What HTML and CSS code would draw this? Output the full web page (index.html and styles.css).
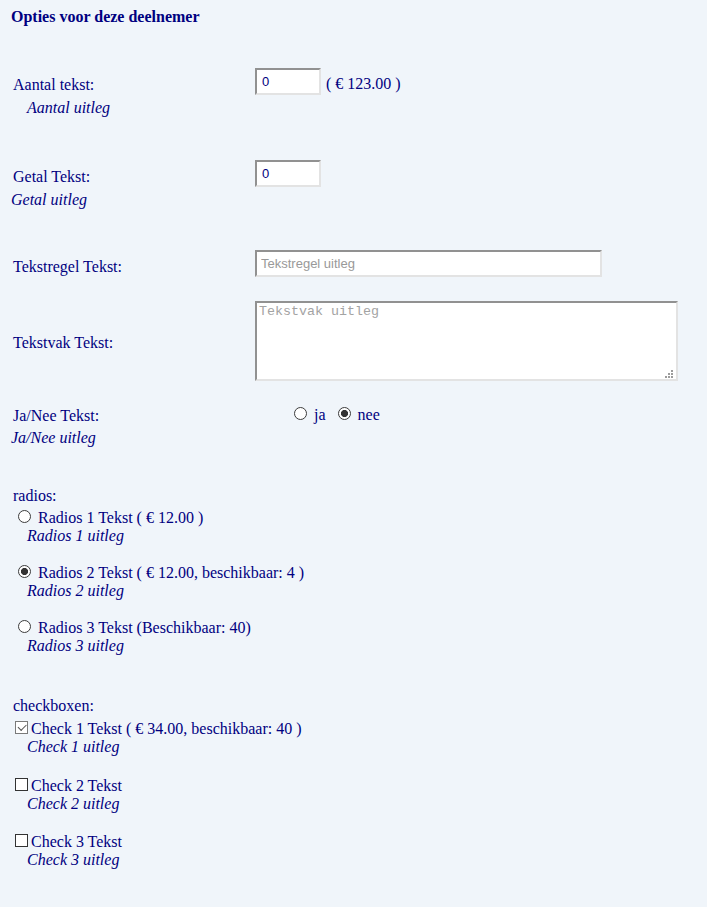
FILE: index.html
```html
<!DOCTYPE html>
<html lang="nl">
<head>
<meta charset="utf-8">
<title>Opties voor deze deelnemer</title>
<link rel="stylesheet" href="styles.css">
</head>
<body>
<div class="page">
  <h1 class="title">Opties voor deze deelnemer</h1>

  <div class="field f1">
    <div class="row">
      <label class="lbl" for="aantal">Aantal tekst:</label>
      <div class="ctl"><input id="aantal" class="num" type="number" value="0"><span class="price">( € 123.00 )</span></div>
    </div>
    <div class="hint indent">Aantal uitleg</div>
  </div>

  <div class="field f2">
    <div class="row">
      <label class="lbl" for="getal">Getal Tekst:</label>
      <div class="ctl"><input id="getal" class="num" type="number" value="0"></div>
    </div>
    <div class="hint out">Getal uitleg</div>
  </div>

  <div class="field f3">
    <div class="row">
      <label class="lbl" for="regel">Tekstregel Tekst:</label>
      <div class="ctl"><input id="regel" class="line" type="text" placeholder="Tekstregel uitleg"></div>
    </div>
  </div>

  <div class="field f4">
    <div class="row">
      <label class="lbl lbl-ta" for="vak">Tekstvak Tekst:</label>
      <div class="ctl">
        <span class="ta-wrap">
          <textarea id="vak" class="area" placeholder="Tekstvak uitleg"></textarea>
          <svg class="grip" width="8" height="8" viewBox="0 0 8 8" aria-hidden="true">
            <rect x="6" y="0" width="2" height="2"/>
            <rect x="3" y="3" width="2" height="2"/>
            <rect x="6" y="3" width="2" height="2"/>
            <rect x="0" y="6" width="2" height="2"/>
            <rect x="3" y="6" width="2" height="2"/>
            <rect x="6" y="6" width="2" height="2"/>
          </svg>
        </span>
      </div>
    </div>
  </div>

  <div class="field f5">
    <div class="row">
      <span class="lbl lbl-yn">Ja/Nee Tekst:</span>
      <div class="ctl ctl-yn">
        <label class="yn"><input class="rad" type="radio" name="jn" value="ja"> ja</label><label class="yn"><input class="rad" type="radio" name="jn" value="nee" checked> nee</label>
      </div>
    </div>
    <div class="hint out">Ja/Nee uitleg</div>
  </div>

  <div class="group g-radios">
    <div class="group-title">radios:</div>
    <div class="opt first">
      <label class="opt-line"><input class="rad" type="radio" name="radios"> Radios 1 Tekst ( € 12.00 )</label>
      <div class="opt-hint">Radios 1 uitleg</div>
    </div>
    <div class="opt">
      <label class="opt-line"><input class="rad" type="radio" name="radios" checked> Radios 2 Tekst ( € 12.00, beschikbaar: 4 )</label>
      <div class="opt-hint">Radios 2 uitleg</div>
    </div>
    <div class="opt">
      <label class="opt-line"><input class="rad" type="radio" name="radios"> Radios 3 Tekst (Beschikbaar: 40)</label>
      <div class="opt-hint">Radios 3 uitleg</div>
    </div>
  </div>

  <div class="group g-checks">
    <div class="group-title">checkboxen:</div>
    <div class="chk first">
      <label class="chk-line"><input class="cb" type="checkbox" checked>Check 1 Tekst ( € 34.00, beschikbaar: 40 )</label>
      <div class="chk-hint">Check 1 uitleg</div>
    </div>
    <div class="chk c2">
      <label class="chk-line"><input class="cb" type="checkbox">Check 2 Tekst</label>
      <div class="chk-hint">Check 2 uitleg</div>
    </div>
    <div class="chk c3">
      <label class="chk-line"><input class="cb" type="checkbox">Check 3 Tekst</label>
      <div class="chk-hint">Check 3 uitleg</div>
    </div>
  </div>
</div>
</body>
</html>
```
FILE: styles.css
```css
html, body {
  margin: 0;
  background: #f0f5fa;
}
body {
  color: #000080;
  font-family: "Liberation Serif", "Times New Roman", serif;
  font-size: 16px;
  line-height: 18px;
}
.page {
  padding: 8px 0 40px 13px;
}
.title {
  margin: 0 0 0 -2px;
  font-size: 16px;
  line-height: 18px;
  font-weight: bold;
}

/* form rows */
.f1 { margin-top: 42px; }
.f2 { margin-top: 43px; }
.f3 { margin-top: 41px; }
.f4 { margin-top: 24px; }
.f5 { margin-top: 25px; }

.row {
  display: grid;
  grid-template-columns: 242px 1fr;
  align-items: start;
}
.lbl {
  padding-top: 8px;
}
.lbl-ta {
  padding-top: 33px;
}
.lbl-yn {
  padding-top: 1px;
}
.ctl {
  display: flex;
  align-items: flex-start;
}
.price {
  padding-top: 7px;
  margin-left: 5px;
}

.hint {
  font-style: italic;
  margin-top: 4px;
}
.hint.indent {
  padding-left: 14px;
}
.hint.out {
  margin-left: -2px;
}

/* inputs */
.num,
.line {
  box-sizing: border-box;
  height: 27px;
  margin: 0;
  padding: 0 4px 0 5px;
  border: 2px solid;
  border-color: #919191 #e3e3e3 #e3e3e3 #919191;
  background: #fff;
  color: #000080;
  font-family: "Liberation Sans", Arial, sans-serif;
  font-size: 13px;
  outline: none;
}
.num {
  width: 66px;
  -moz-appearance: textfield;
}
.num::-webkit-inner-spin-button,
.num::-webkit-outer-spin-button {
  -webkit-appearance: none;
  margin: 0;
}
.line {
  width: 347px;
  padding-left: 4px;
}
.line::placeholder {
  color: #999;
}

.ta-wrap {
  position: relative;
  display: block;
  width: 423px;
  height: 80px;
}
.area {
  display: block;
  box-sizing: border-box;
  width: 423px;
  height: 80px;
  margin: 0;
  padding: 1px 2px;
  border: 2px solid;
  border-color: #919191 #e3e3e3 #e3e3e3 #919191;
  background: #fff;
  font-family: "Liberation Mono", "Courier New", monospace;
  font-size: 13.33px;
  resize: none;
  outline: none;
}
.area::placeholder {
  color: #a3a3a3;
}
.grip {
  position: absolute;
  right: 5px;
  bottom: 3px;
  fill: #9c9c9c;
}

/* radios */
.rad {
  -webkit-appearance: none;
  appearance: none;
  box-sizing: border-box;
  width: 13px;
  height: 13px;
  margin: 0 3px 0 5px;
  border: 1px solid #3c3c3c;
  border-radius: 50%;
  background: #fff;
  vertical-align: baseline;
}
.rad:checked {
  background: radial-gradient(circle, #333 0, #333 3.2px, #fff 3.9px);
}

.ctl-yn {
  display: block;
  padding-left: 34px;
}
.yn + .yn {
  margin-left: 7px;
}

/* groups */
.g-radios { margin-top: 40px; }
.g-checks { margin-top: 42px; }

.opt { margin-top: 19px; }
.opt.first { margin-top: 4px; }
.opt-line { display: block; }
.opt-hint {
  font-style: italic;
  padding-left: 14px;
}

.chk { margin-top: 21px; }
.chk.first { margin-top: 5px; }
.chk.c3 { margin-top: 20px; }
.chk-line {
  display: block;
  margin-left: -2px;
}
.chk-hint {
  font-style: italic;
  padding-left: 14px;
}

.cb {
  -webkit-appearance: none;
  appearance: none;
  position: relative;
  box-sizing: border-box;
  width: 13px;
  height: 13px;
  margin: 0 3px 0 4px;
  border: 1px solid #333;
  background: #fff;
  vertical-align: baseline;
}
.cb:checked {
  border-color: #7a7a7a;
}
.cb:checked::after {
  content: "";
  position: absolute;
  left: 1.5px;
  top: 1.5px;
  width: 7px;
  height: 3.5px;
  border-left: 1.6px solid #555;
  border-bottom: 1.6px solid #555;
  transform: rotate(-45deg);
}
```
